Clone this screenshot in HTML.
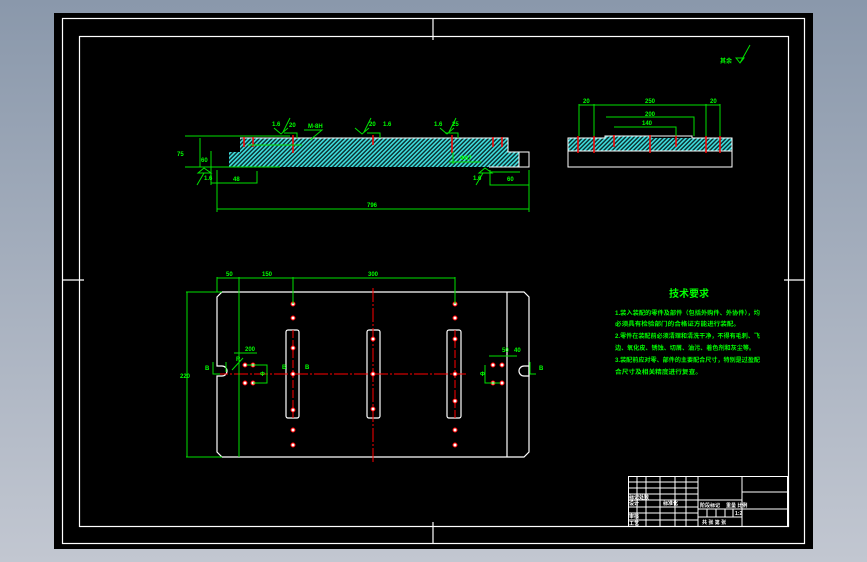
<!DOCTYPE html>
<html><head><meta charset="utf-8"><style>
html,body{margin:0;padding:0;width:867px;height:562px;overflow:hidden;background:linear-gradient(#8a98ab,#c2c7d1);}
svg{position:absolute;left:0;top:0}
text{font-family:"Liberation Sans","Noto Sans CJK SC",sans-serif;fill:#00ff00;font-weight:bold}
</style></head><body>
<svg width="867" height="562" viewBox="0 0 867 562">
<defs>
<pattern id="h" width="3" height="3" patternUnits="userSpaceOnUse" patternTransform="rotate(45)">
<rect width="3" height="3" fill="#0a2a2a"/><rect width="1.6" height="3" fill="#3fe0e0"/>
</pattern>
</defs>
<rect x="54" y="13" width="759" height="536" fill="#000"/>
<g fill="none" stroke="#fff" stroke-width="1.2">
<rect x="62.5" y="18.5" width="742" height="525"/>
<rect x="79.5" y="36.5" width="709" height="490"/>
<path d="M62 280H84M784 280H805M433 18V40M433 522V544"/>
</g>
<!-- section view -->
<g>
<path d="M240 138H508V152H489V167H257V152H240Z" fill="url(#h)"/>
<rect x="229" y="152" width="28" height="15" fill="url(#h)"/>
<rect x="489" y="152" width="30" height="15" fill="url(#h)"/>
<g fill="none" stroke="#fff" stroke-width="1">
<path d="M240 138H508V152H519V167H489"/>
<rect x="519" y="152" width="10" height="15"/>
</g>
<g stroke="#f00" stroke-width="1.5">
<path d="M244 137V147M253 137V147M293 135V153M373 135V145M452 135V153M493 137V147M502 137V147"/>
</g>
<g stroke="#00e000" stroke-width="1" fill="none">
<path d="M185 136H290M200 138V167M185 167H280M211 151V185M211 183H257V171M217 170V212M529 170V212M217 209H529M490 170V185H529M490 172H520M248 145H302M449 162H481M453 152V164M274 128L281 134 288 128M355 128L362 134 369 128M440 128L447 134 454 128M284 133H297V138M367 133H380V138M445 133H458V138M304 130H322L310 140M283 132L290 118M364 132L371 118M449 132L456 118M204 168L198 173 211 173ZM485 168L479 173 492 173ZM197 185L204 173M476 185L483 173"/>
</g>
<g font-size="6">
<text x="177" y="156">75</text><text x="201" y="162">60</text><text x="204" y="180">1.6</text>
<text x="233" y="181">48</text><text x="272" y="126">1.6</text><text x="289" y="127">20</text>
<text x="308" y="128">M-8H</text><text x="369" y="126">20</text><text x="383" y="126">1.6</text>
<text x="434" y="126">1.6</text><text x="452" y="126">25</text><text x="460" y="160">Φ67</text>
<text x="473" y="180">1.6</text><text x="507" y="181">60</text><text x="367" y="207">796</text>
</g>
</g>
<!-- side view -->
<g>
<path d="M568 138H605V136H652V138H732V151H568Z" fill="url(#h)"/>
<g fill="none" stroke="#fff" stroke-width="1">
<path d="M568 138H605V136H692V138H732V167H568ZM568 151H732"/>
</g>
<g stroke="#f00" stroke-width="1.5"><path d="M578 136V153M594 136V153M614 135V147M650 135V153M676 135V147M706 136V153M720 136V153"/></g>
<g stroke="#00e000" stroke-width="1" fill="none">
<path d="M579 105H720M579 104V136M594 104V136M706 104V136M720 104V136M606 117H694V136M614 127H676V136M736 58L740 63 744 58ZM740 63L750 45"/>
</g>
<g font-size="6"><text x="583" y="103">20</text><text x="645" y="103">250</text><text x="710" y="103">20</text><text x="645" y="116">200</text><text x="642" y="125">140</text><text x="720" y="63">其余</text></g>
</g>
<!-- top view -->
<g fill="none" stroke="#fff" stroke-width="1.2">
<path d="M222 292H524L529 297V452L524 457H222L217 452V376H222A5 5 0 0 0 222 366H217V297Z"/>
<path d="M524 366H529V376H524A5 5 0 0 1 524 366Z"/>
<rect x="286" y="330" width="13" height="88" rx="2"/>
<rect x="367" y="330" width="13" height="88" rx="2"/>
<rect x="447" y="330" width="14" height="88" rx="2"/>
<path d="M507 292V457"/>
</g>
<g stroke="#f00" stroke-width="1" fill="none">
<path d="M214 374H466" stroke-dasharray="14 2 2 2"/>
<path d="M373 288V462" stroke-dasharray="14 2 2 2"/>
<path d="M455 330V418M293 330V418" stroke-dasharray="8 2"/>
</g>
<g fill="#fff" stroke="#f00" stroke-width="1">
<circle cx="293" cy="304" r="2"/><circle cx="293" cy="318" r="2"/><circle cx="293" cy="348" r="2"/><circle cx="293" cy="374" r="2"/><circle cx="293" cy="410" r="2"/><circle cx="293" cy="430" r="2"/><circle cx="293" cy="445" r="2"/>
<circle cx="373" cy="339" r="2"/><circle cx="373" cy="374" r="2"/><circle cx="373" cy="409" r="2"/>
<circle cx="455" cy="304" r="2"/><circle cx="455" cy="318" r="2"/><circle cx="455" cy="339" r="2"/><circle cx="455" cy="374" r="2"/><circle cx="455" cy="401" r="2"/><circle cx="455" cy="430" r="2"/><circle cx="455" cy="445" r="2"/>
<circle cx="245" cy="365" r="2"/><circle cx="253" cy="365" r="2"/><circle cx="245" cy="383" r="2"/><circle cx="253" cy="383" r="2"/>
<circle cx="493" cy="365" r="2"/><circle cx="502" cy="365" r="2"/><circle cx="493" cy="383" r="2"/><circle cx="502" cy="383" r="2"/>
</g>
<g stroke="#00e000" stroke-width="1" fill="none">
<path d="M217 278H455M217 277V292M239 277V457M293 277V304M455 277V304M186 292H222M186 457H222M187 292V457M247 365H267V383H253M234 353H257M485 365H485V383H500M489 356H517M213 362V374H220M530 362V374H536M226 362V372M243 358L232 370"/>
</g>
<g font-size="6"><text x="226" y="276">50</text><text x="262" y="276">150</text><text x="368" y="276">300</text><text x="180" y="378">220</text>
<text x="245" y="351">200</text><text x="236" y="361">R</text><text x="502" y="352">50</text><text x="514" y="352">40</text><text x="205" y="370">B</text><text x="539" y="370">B</text>
<text x="282" y="369">B</text><text x="305" y="369">B</text><text x="260" y="376">Φ</text><text x="480" y="376">Φ</text></g>
<!-- tech requirements -->
<g font-size="6"><text x="669" y="297" font-size="10">技术要求</text>
<text x="615" y="315" textLength="145" lengthAdjust="spacingAndGlyphs">1.装入装配的零件及部件（包括外购件、外协件），均</text>
<text x="615" y="326" textLength="125" lengthAdjust="spacingAndGlyphs">必须具有检验部门的合格证方能进行装配。</text>
<text x="615" y="338" textLength="145" lengthAdjust="spacingAndGlyphs">2.零件在装配前必须清理和清洗干净，不得有毛刺、飞</text>
<text x="615" y="350" textLength="140" lengthAdjust="spacingAndGlyphs">边、氧化皮、锈蚀、切屑、油污、着色剂和灰尘等。</text>
<text x="615" y="362" textLength="145" lengthAdjust="spacingAndGlyphs">3.装配前应对零、部件的主要配合尺寸，特别是过盈配</text>
<text x="615" y="374" textLength="87" lengthAdjust="spacingAndGlyphs">合尺寸及相关精度进行复查。</text></g>
<!-- title block -->
<g stroke="#fff" stroke-width="1" fill="none">
<rect x="628.5" y="476.5" width="159" height="50"/>
<path d="M628 482H698M628 488H698M628 494H698M628 500H698M628 507H698M628 513H698M628 520H698M637 476V526M646 476V526M660 476V526M675 476V526M686 476V526M698 476V526M742 476V526M698 500H742M698 509H742M698 517H742M742 492H788M742 509H788M707 509V517M716 509V517M725 509V517M733 509V517"/>
</g>
<g font-size="5" style="fill:#fff"><text x="629" y="499" style="fill:#fff">标记处数</text><text x="700" y="507" style="fill:#fff">阶段标记</text><text x="726" y="507" style="fill:#fff">重量 比例</text><text x="735" y="515" style="fill:#fff">1:2</text><text x="702" y="524" style="fill:#fff">共 张 第 张</text><text x="629" y="505" style="fill:#fff">设计</text><text x="629" y="518" style="fill:#fff">审核</text><text x="629" y="525" style="fill:#fff">工艺</text><text x="663" y="505" style="fill:#fff">标准化</text></g>
</svg>
</body></html>
